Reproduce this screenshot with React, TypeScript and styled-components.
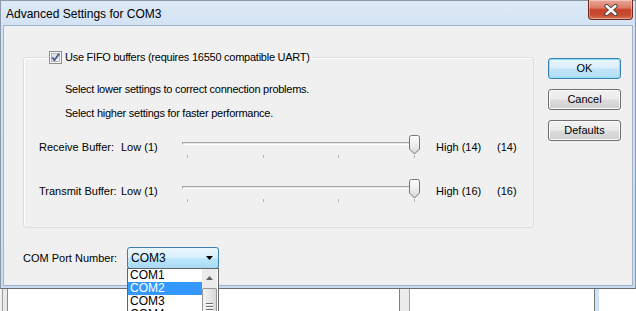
import React from "react";
import styled, { createGlobalStyle } from "styled-components";

const PORTS = ["COM1", "COM2", "COM3", "COM4"];

const BUFFERS = [
    { label: "Receive Buffer:", low: "Low (1)", high: "High (14)", value: 14, max: 14 },
    { label: "Transmit Buffer:", low: "Low (1)", high: "High (16)", value: 16, max: 16 },
];

/* ------------------ Styled ------------------ */

const GlobalStyle = createGlobalStyle`
    html, body {
        margin: 0;
        padding: 0;
        background: #fff;
    }
    body {
        font-family: "Liberation Sans", Arial, sans-serif;
        font-size: 11px;
        color: #000;
    }
`;

const Screen = styled.div`
    width: 636px;
    height: 311px;
    overflow: hidden;
    display: flex;
    flex-direction: column;
    background: #fff;
`;

const Window = styled.div`
    width: 636px;
    height: 289px;
    flex: none;
    box-sizing: border-box;
    display: flex;
    flex-direction: column;
    border: 1px solid #8a9aab;
    border-bottom-color: #6b6b6b;
    background: linear-gradient(180deg, #dde9f6 0px, #d3e3f4 24px, #c9dcf1 100%);
`;

const TitleBar = styled.div`
    height: 24px;
    flex: none;
    display: flex;
    justify-content: space-between;
    align-items: flex-start;
`;

const Title = styled.div`
    padding: 6px 0 0 5px;
    font-size: 12px;
    line-height: 15px;
    color: #000;
`;

const CloseButton = styled.div`
    width: 45px;
    height: 20px;
    margin: -1px 2px 0 0;
    box-sizing: border-box;
    border: 1px solid #6d2a1e;
    border-top: none;
    border-radius: 0 0 4px 4px;
    background: linear-gradient(180deg, #e9a899 0%, #dc7c66 40%, #c8432b 52%, #c94c2f 80%, #d8775b 100%);
    box-shadow: inset 0 0 0 1px rgba(255, 255, 255, 0.35);
    display: flex;
    align-items: center;
    justify-content: center;
    padding-top: 1px;
`;

const Client = styled.div`
    flex: 1;
    margin: 0 2px 2px 2px;
    border: 1px solid #9fb4cc;
    background: #f0f0f0;
    display: flex;
`;

const Main = styled.div`
    padding: 25px 0 0 19px;
    display: flex;
    flex-direction: column;
`;

const GroupBox = styled.fieldset`
    width: 511px;
    box-sizing: border-box;
    margin: 0;
    padding: 0 0 24px 0;
    border: 1px solid #d5dfe5;
    border-radius: 3px;
    box-shadow: inset 1px 1px 0 #fff;
`;

const Legend = styled.legend`
    margin-left: 23px;
    padding: 0 2px;
    display: flex;
    align-items: center;
    gap: 3px;
    line-height: 13px;
    letter-spacing: -0.25px;
`;

const Hint = styled.div<{ $gap: number }>`
    margin: ${(p) => p.$gap}px 0 0 41px;
    line-height: 13px;
    letter-spacing: -0.25px;
`;

const BufferRow = styled.div<{ $gap: number }>`
    margin: ${(p) => p.$gap}px 0 0 15px;
    display: grid;
    grid-template-columns: 82px 61px 238px 77px auto;
    align-items: start;
`;

const RowText = styled.span<{ $indent?: number }>`
    padding: 6px 0 0 ${(p) => p.$indent ?? 0}px;
    line-height: 13px;
    white-space: nowrap;
`;

const Slider = styled.div`
    position: relative;
    width: 238px;
    height: 24px;
`;

const Track = styled.div`
    width: 233px;
    height: 3px;
    margin-top: 7px;
    box-sizing: border-box;
    border-top: 1px solid #a5a5a5;
    border-left: 1px solid #a5a5a5;
    border-bottom: 1px solid #fff;
    background: #e6e6e6;
`;

const TickRow = styled.div`
    width: 228px;
    margin: 10px 0 0 5px;
    display: flex;
    justify-content: space-between;
`;

const Tick = styled.div`
    width: 1px;
    height: 3px;
    background: #b4b4b4;
`;

const Thumb = styled.svg`
    position: absolute;
    top: 0;
`;

const PortRow = styled.div`
    margin-top: 19px;
    display: flex;
    align-items: center;
`;

const PortLabel = styled.span`
    width: 104px;
    line-height: 13px;
`;

const ComboWrap = styled.div`
    position: relative;
`;

const Combo = styled.div`
    width: 92px;
    height: 22px;
    box-sizing: border-box;
    border: 1px solid #3c7fb1;
    border-radius: 3px;
    background: linear-gradient(180deg, #eaf6fd 0%, #d9f0fc 48%, #bee6fd 52%, #a7d9f5 100%);
    display: flex;
    align-items: center;
    justify-content: space-between;
    padding: 0 5px 0 3px;
    font-size: 12px;
`;

const DropList = styled.div`
    position: absolute;
    top: 21px;
    left: 0;
    width: 92px;
    height: 60px;
    box-sizing: border-box;
    border: 1px solid #646464;
    border-bottom: none;
    background: #fff;
    display: flex;
    z-index: 2;
`;

const Items = styled.div`
    flex: 1;
    display: flex;
    flex-direction: column;
`;

const Item = styled.div<{ $selected?: boolean }>`
    height: 13px;
    line-height: 13px;
    padding-left: 2px;
    font-size: 12px;
    background: ${(p) => (p.$selected ? "#3399ff" : "transparent")};
    color: ${(p) => (p.$selected ? "#fff" : "#000")};
`;

const ScrollBar = styled.div`
    width: 15px;
    margin-right: 1px;
    background: #ececec;
    display: flex;
    flex-direction: column;
    align-items: center;
`;

const ScrollArrow = styled.div`
    height: 17px;
    display: flex;
    align-items: center;
    justify-content: center;
`;

const ScrollThumb = styled.div`
    width: 15px;
    flex: 1;
    margin-top: 2px;
    box-sizing: border-box;
    border: 1px solid #979797;
    border-bottom: none;
    border-radius: 2px 2px 0 0;
    background: linear-gradient(90deg, #f3f3f3, #e6e6e6 50%, #d8d8d8);
    display: flex;
    flex-direction: column;
    align-items: center;
    gap: 2px;
    padding-top: 14px;
`;

const Grip = styled.div`
    width: 7px;
    height: 1px;
    background: #6e6e6e;
    box-shadow: 0 1px 0 #fff;
`;

const ButtonColumn = styled.div`
    margin-left: 14px;
    padding-top: 32px;
    display: flex;
    flex-direction: column;
    gap: 10px;
`;

const Button = styled.div<{ $default?: boolean }>`
    width: 73px;
    height: 21px;
    box-sizing: border-box;
    border: 1px solid ${(p) => (p.$default ? "#3c7fb1" : "#707070")};
    border-radius: 3px;
    background: ${(p) =>
        p.$default
            ? "linear-gradient(180deg, #eaf6fd 0%, #dbeffa 48%, #c2e5f7 52%, #b4ddf3 100%)"
            : "linear-gradient(180deg, #f2f2f2 0%, #ebebeb 48%, #dddddd 52%, #cfcfcf 100%)"};
    box-shadow: inset 0 0 0 1px ${(p) => (p.$default ? "#8de0fb" : "#fbfbfb")};
    display: flex;
    align-items: center;
    justify-content: center;
    line-height: 13px;
`;

const Behind = styled.div`
    flex: 1;
    display: flex;
`;

const Strip = styled.div<{ $w: number; $bg: string }>`
    width: ${(p) => p.$w}px;
    flex: none;
    background: ${(p) => p.$bg};
`;

const Fill = styled.div`
    flex: 1;
    background: #fff;
`;

/* ------------------ Component ------------------ */

const CheckBox = () => (
    <svg width="13" height="13" viewBox="0 0 13 13">
        <defs>
            <linearGradient id="cbg" x1="0" y1="0" x2="1" y2="1">
                <stop offset="0" stopColor="#dcdcdc" />
                <stop offset="1" stopColor="#fbfbfb" />
            </linearGradient>
        </defs>
        <rect x="0.5" y="0.5" width="12" height="12" fill="#f6f6f6" stroke="#8e8f8f" />
        <rect x="2.5" y="2.5" width="8" height="8" fill="url(#cbg)" stroke="#b9b9b9" />
        <path d="M3.2 6.4 L5.4 9.2 L10.2 2.6" fill="none" stroke="#4a5f97" strokeWidth="1.9" />
    </svg>
);

const SliderControl: React.FC<{ value: number; max: number }> = ({ value, max }) => {
    const frac = max > 1 ? (value - 1) / (max - 1) : 0;
    return (
        <Slider>
            <Track />
            <TickRow>
                {[0, 1, 2, 3].map((i) => (
                    <Tick key={i} />
                ))}
            </TickRow>
            <Thumb width="11" height="20" viewBox="0 0 11 20" style={{ left: 5 + frac * 227 - 5 }}>
                <defs>
                    <linearGradient id="thg" x1="0" y1="0" x2="0" y2="1">
                        <stop offset="0" stopColor="#ffffff" />
                        <stop offset="0.55" stopColor="#ececec" />
                        <stop offset="1" stopColor="#d6d6d6" />
                    </linearGradient>
                </defs>
                <path d="M0.5 2.5 Q0.5 0.5 2.5 0.5 H8.5 Q10.5 0.5 10.5 2.5 V14 L5.5 19 L0.5 14 Z" fill="url(#thg)" stroke="#767676" />
            </Thumb>
        </Slider>
    );
};

export default function App() {
    return (
        <>
            <GlobalStyle />
            <Screen>
                <Window>
                    <TitleBar>
                        <Title>Advanced Settings for COM3</Title>
                        <CloseButton>
                            <svg width="16" height="12" viewBox="0 0 16 12">
                                <path d="M3.5 2 L12.5 10 M12.5 2 L3.5 10" stroke="#3b3b3b" strokeWidth="4.2" strokeLinecap="round" />
                                <path d="M3.5 2 L12.5 10 M12.5 2 L3.5 10" stroke="#ffffff" strokeWidth="2.4" strokeLinecap="round" />
                            </svg>
                        </CloseButton>
                    </TitleBar>
                    <Client>
                        <Main>
                            <GroupBox>
                                <Legend>
                                    <CheckBox />
                                    Use FIFO buffers (requires 16550 compatible UART)
                                </Legend>
                                <Hint $gap={19}>Select lower settings to correct connection problems.</Hint>
                                <Hint $gap={11}>Select higher settings for faster performance.</Hint>
                                {BUFFERS.map((b, i) => (
                                    <BufferRow key={b.label} $gap={i === 0 ? 15 : 20}>
                                        <RowText>{b.label}</RowText>
                                        <RowText>{b.low}</RowText>
                                        <SliderControl value={b.value} max={b.max} />
                                        <RowText $indent={16}>{b.high}</RowText>
                                        <RowText>({b.value})</RowText>
                                    </BufferRow>
                                ))}
                            </GroupBox>
                            <PortRow>
                                <PortLabel>COM Port Number:</PortLabel>
                                <ComboWrap>
                                    <Combo>
                                        <span>COM3</span>
                                        <svg width="7" height="4" viewBox="0 0 7 4">
                                            <path d="M0 0 H7 L3.5 4 Z" fill="#000" />
                                        </svg>
                                    </Combo>
                                    <DropList>
                                        <Items>
                                            {PORTS.map((p) => (
                                                <Item key={p} $selected={p === "COM2"}>
                                                    {p}
                                                </Item>
                                            ))}
                                        </Items>
                                        <ScrollBar>
                                            <ScrollArrow>
                                                <svg width="7" height="4" viewBox="0 0 7 4">
                                                    <path d="M0 4 H7 L3.5 0 Z" fill="#606060" />
                                                </svg>
                                            </ScrollArrow>
                                            <ScrollThumb>
                                                <Grip />
                                                <Grip />
                                                <Grip />
                                            </ScrollThumb>
                                        </ScrollBar>
                                    </DropList>
                                </ComboWrap>
                            </PortRow>
                        </Main>
                        <ButtonColumn>
                            <Button $default>OK</Button>
                            <Button>Cancel</Button>
                            <Button>Defaults</Button>
                        </ButtonColumn>
                    </Client>
                </Window>
                <Behind>
                    <Strip $w={2} $bg="#f0f0f0" />
                    <Strip $w={1} $bg="#a0a0a0" />
                    <Strip $w={4} $bg="#e8e8e8" />
                    <Strip $w={1} $bg="#8a8a8a" />
                    <Strip $w={391} $bg="#fff" />
                    <Strip $w={1} $bg="#808080" />
                    <Strip $w={9} $bg="#ececec" />
                    <Strip $w={1} $bg="#a0a0a0" />
                    <Strip $w={184} $bg="#fff" />
                    <Strip $w={1} $bg="#777" />
                    <Strip $w={4} $bg="#cfe3f7" />
                    <Fill />
                </Behind>
            </Screen>
        </>
    );
}
